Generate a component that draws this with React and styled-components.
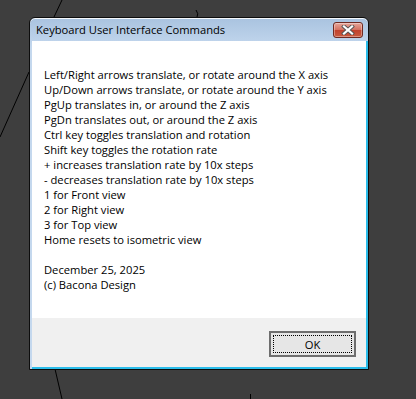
import React from "react";
import styled, { createGlobalStyle } from "styled-components";

const Global = createGlobalStyle`
  html, body { margin: 0; padding: 0; background: #3e3e3e; }
  body { width: 416px; height: 399px; overflow: hidden; }
`;

const Desktop = styled.div`
  position: relative;
  width: 416px;
  height: 399px;
  padding: 17px 0 0 29px;
  box-sizing: border-box;
`;

const Wireframe = styled.svg`
  position: absolute;
  left: 0;
  top: 0;
  width: 416px;
  height: 399px;
`;

const Window = styled.div`
  position: relative;
  width: 340px;
  height: 353px;
  box-sizing: border-box;
  border: 1px solid #0d0d0d;
  border-radius: 6px 6px 0 0;
  background: linear-gradient(#a9c3df, #c4d8ee 30px, #c4d8ee);
  box-shadow: inset 0 1px 0 #f4f8fc;
  display: flex;
  flex-direction: column;
  font-family: "Open Sans", "Noto Sans", sans-serif;
`;

const TitleBar = styled.div`
  height: 23px;
  display: flex;
  align-items: center;
  justify-content: space-between;
  padding: 0 5px 0 6px;
`;

const Title = styled.span`
  font-size: 11.2px;
  color: #000;
  line-height: 14px;
`;

const CloseButton = styled.div`
  width: 30px;
  height: 16px;
  box-sizing: border-box;
  border: 1px solid #6f2a22;
  border-radius: 3px;
  background: linear-gradient(#e6a79b, #d4705f 50%, #c1412c 51%, #c95a3e);
  box-shadow: inset 0 0 0 1px rgba(255, 255, 255, 0.35);
  display: flex;
  align-items: center;
  justify-content: center;
`;

const Client = styled.div`
  flex: 1;
  margin: 0 0 0 2px;
  display: flex;
  flex-direction: column;
  border-right: 2px solid #2bbdea;
  border-bottom: 2px solid #2bbdea;
`;

const Body = styled.div`
  flex: 1;
  background: #fff;
  padding: 26px 12px 0 12px;
  font-size: 11.2px;
  line-height: 15px;
  color: #000;
`;

const Line = styled.div`
  white-space: pre;
  min-height: 15px;
`;

const Footer = styled.div`
  height: 49px;
  box-sizing: border-box;
  background: #f0f0f0;
  display: flex;
  justify-content: flex-end;
  align-items: flex-start;
  padding: 13px 10px 0 0;
`;

const Button = styled.div`
  width: 87px;
  height: 26px;
  box-sizing: border-box;
  border: 2px solid #6e6e6e;
  background: #e6e6e6;
  padding: 2px;
  display: flex;
`;

const Focus = styled.div`
  flex: 1;
  outline: 1px dotted #000;
  outline-offset: -1px;
  display: flex;
  align-items: center;
  justify-content: center;
  font-size: 11.2px;
  color: #000;
`;

const lines = [
  "Left/Right arrows translate, or rotate around the X axis",
  "Up/Down arrows translate, or rotate around the Y axis",
  "PgUp translates in, or around the Z axis",
  "PgDn translates out, or around the Z axis",
  "Ctrl key toggles translation and rotation",
  "Shift key toggles the rotation rate",
  "+ increases translation rate by 10x steps",
  "- decreases translation rate by 10x steps",
  "1 for Front view",
  "2 for Right view",
  "3 for Top view",
  "Home resets to isometric view",
  "",
  "December 25, 2025",
  "(c) Bacona Design",
];

export default function App() {
  return (
    <>
      <Global />
      <Desktop>
        <Wireframe viewBox="0 0 416 399">
          <g stroke="#000" strokeWidth="1" fill="none">
            <line x1="62" y1="0" x2="54" y2="17" />
            <line x1="29" y1="72" x2="0" y2="137" />
            <line x1="55" y1="369" x2="62" y2="399" />
            <line x1="250.5" y1="394" x2="250.5" y2="399" />
            <path d="M196 10 Q199 14 197 17" />
          </g>
        </Wireframe>
        <Window>
          <TitleBar>
            <Title>Keyboard User Interface Commands</Title>
            <CloseButton>
              <svg width="14" height="10" viewBox="0 0 14 10">
                <path d="M3 1.5 L11 8.5 M11 1.5 L3 8.5" stroke="#555" strokeWidth="4" strokeLinecap="square" />
                <path d="M3 1.5 L11 8.5 M11 1.5 L3 8.5" stroke="#fff" strokeWidth="2.2" strokeLinecap="square" />
              </svg>
            </CloseButton>
          </TitleBar>
          <Client>
            <Body>
              {lines.map((l, i) => (
                <Line key={i}>{l}</Line>
              ))}
            </Body>
            <Footer>
              <Button>
                <Focus>OK</Focus>
              </Button>
            </Footer>
          </Client>
        </Window>
      </Desktop>
    </>
  );
}
